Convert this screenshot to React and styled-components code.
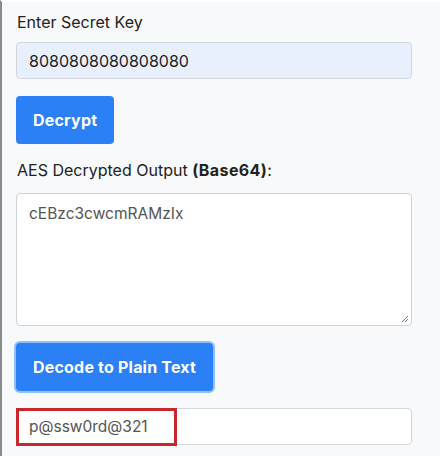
import styled, { createGlobalStyle } from 'styled-components';

const Global = createGlobalStyle`
    html, body {
        margin: 0;
        padding: 0;
        background: #f8f9fb;
    }
    body {
        font-family: Inter, 'Open Sans', sans-serif;
    }
`;

const Panel = styled.div`
    width: 440px;
    height: 456px;
    box-sizing: border-box;
    border-left: 2px solid #8a8a8a;
    border-top: 2px solid #ffffff;
    background: #f8f9fb;
    padding: 10px 28px 0 14px;
    display: flex;
    flex-direction: column;
    overflow: hidden;
`;

const Label = styled.label`
    display: block;
    height: 20px;
    font-size: 16px;
    color: #222;
    line-height: 20px;
    margin: ${(p) => p.$mt || 0}px 0 0 1px;
    b {
        font-weight: 700;
        letter-spacing: 0.4px;
    }
`;

const Field = styled.div`
    position: relative;
    margin-top: ${(p) => p.$mt || 0}px;
`;

const Input = styled.div`
    height: 37px;
    box-sizing: border-box;
    border: 1px solid #d3d6db;
    border-radius: 4px;
    background: ${(p) => (p.$filled ? '#e8f0fe' : '#ffffff')};
    color: ${(p) => (p.$filled ? '#222' : '#555')};
    font-size: ${(p) => (p.$filled ? 16 : 15.5)}px;
    padding: 0 12px;
    display: flex;
    align-items: center;
`;

const TextArea = styled.div`
    height: 133px;
    box-sizing: border-box;
    border: 1px solid #cfd2d6;
    border-radius: 4px;
    background: #fff;
    color: #555;
    font-size: 15.5px;
    line-height: 20px;
    padding: 10px 12px;
    position: relative;
`;

const Grip = styled.svg`
    position: absolute;
    right: 2px;
    bottom: 2px;
`;

const Button = styled.button`
    align-self: flex-start;
    height: 48px;
    padding: 0 17px;
    margin-top: ${(p) => p.$mt || 0}px;
    border: none;
    border-radius: 4px;
    background: #2b80f5;
    color: #fff;
    font-family: inherit;
    font-weight: 700;
    font-size: 16px;
    letter-spacing: 0.2px;
    box-shadow: ${(p) => (p.$focus ? '0 0 0 2px #8fc0fa' : 'none')};
`;

const Highlight = styled.div`
    position: absolute;
    left: 0;
    top: 0;
    width: 161px;
    height: 38px;
    box-sizing: border-box;
    border: 3px solid #c9262d;
`;

export default function App() {
    return (
        <>
            <Global />
            <Panel>
                <Label>Enter Secret Key</Label>
                <Field $mt={10}>
                    <Input $filled>8080808080808080</Input>
                </Field>
                <Button $mt={17}>Decrypt</Button>
                <Label $mt={16}>
                    AES Decrypted Output <b>(Base64)</b>:
                </Label>
                <Field $mt={13}>
                    <TextArea>
                        cEBzc3cwcmRAMzIx
                        <Grip width="9" height="9" viewBox="0 0 9 9">
                            <path d="M8 2L2 8M8 5L5 8" stroke="#777" strokeWidth="1" />
                        </Grip>
                    </TextArea>
                </Field>
                <Button $mt={17} $focus>
                    Decode to Plain Text
                </Button>
                <Field $mt={17}>
                    <Input>p@ssw0rd@321</Input>
                    <Highlight />
                </Field>
            </Panel>
        </>
    );
}
